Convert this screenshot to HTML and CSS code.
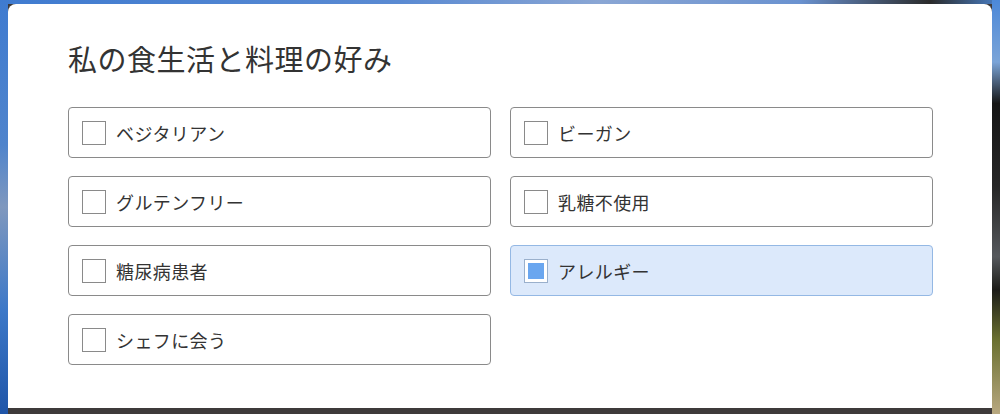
FILE: index.html
```html
<!DOCTYPE html>
<html lang="ja">
<head>
  <meta charset="UTF-8" />
  <title>食生活と料理の好み</title>
  <link rel="stylesheet" href="styles.css">
</head>
<body>
  <div class="backdrop">
    <div class="card">
      <h2>私の食生活と料理の好み</h2>
      <div class="options">
        <label class="option"><span class="box"></span>ベジタリアン</label>
        <label class="option"><span class="box"></span>ビーガン</label>
        <label class="option"><span class="box"></span>グルテンフリー</label>
        <label class="option"><span class="box"></span>乳糖不使用</label>
        <label class="option"><span class="box"></span>糖尿病患者</label>
        <label class="option checked"><span class="box"></span>アレルギー</label>
        <label class="option"><span class="box"></span>シェフに会う</label>
      </div>
    </div>
  </div>
</body>
</html>
```

FILE: styles.css
```css
html, body {
  margin: 0;
  height: 100%;
}

body {
  font-family: "Noto Sans CJK JP", "Noto Sans", sans-serif;
  color: #333;
  overflow: hidden;
}

/* blurred photo behind the dialog */
.backdrop {
  height: 100%;
  box-sizing: border-box;
  padding: 4px 8px 6px 8px;
  background:
    linear-gradient(to bottom, #3f7bd0 0%, #4f84cc 35%, #7f98be 50%, #3c78c8 75%, #1f55a8 100%) left top / 8px 100% no-repeat,
    linear-gradient(to bottom, #4c88d8 0%, #7aa4d8 15%, #161616 25%, #262626 45%, #55585c 62%, #1c1c18 70%, #6a7030 82%, #b8a880 100%) right top / 8px 100% no-repeat,
    linear-gradient(to right, #3f7bd0 0%, #5a8ad2 40%, #8aa6d4 60%, #6a92d0 80%, #2a2a2a 93%, #4a80c8 100%) top / 100% 4px no-repeat,
    #3e3a3a;
}

.card {
  background: #fff;
  height: 100%;
  border-radius: 8px 8px 0 0;
  padding: 35px 59px 0 60px;
  box-sizing: border-box;
}

h2 {
  margin: 0 0 30px 0;
  font-size: 29px;
  font-weight: normal;
  line-height: 38px;
  letter-spacing: 0.5px;
}

.options {
  display: grid;
  grid-template-columns: 1fr 1fr;
  column-gap: 19px;
  row-gap: 18px;
}

.option {
  display: flex;
  align-items: center;
  gap: 10px;
  height: 51px;
  box-sizing: border-box;
  padding-left: 13px;
  border: 1px solid #8a8a8a;
  border-radius: 4px;
  font-size: 18px;
  letter-spacing: 0.4px;
}

.box {
  width: 24px;
  height: 24px;
  box-sizing: border-box;
  border: 1px solid #8a8a8a;
  background: #fff;
  flex: none;
}

.option.checked {
  background: #dce9fb;
  border-color: #94b8e4;
}

.option.checked .box {
  border-color: #9ab0cc;
  padding: 3px;
}

.option.checked .box::after {
  content: "";
  display: block;
  width: 100%;
  height: 100%;
  background: #6aa6ef;
}
```
